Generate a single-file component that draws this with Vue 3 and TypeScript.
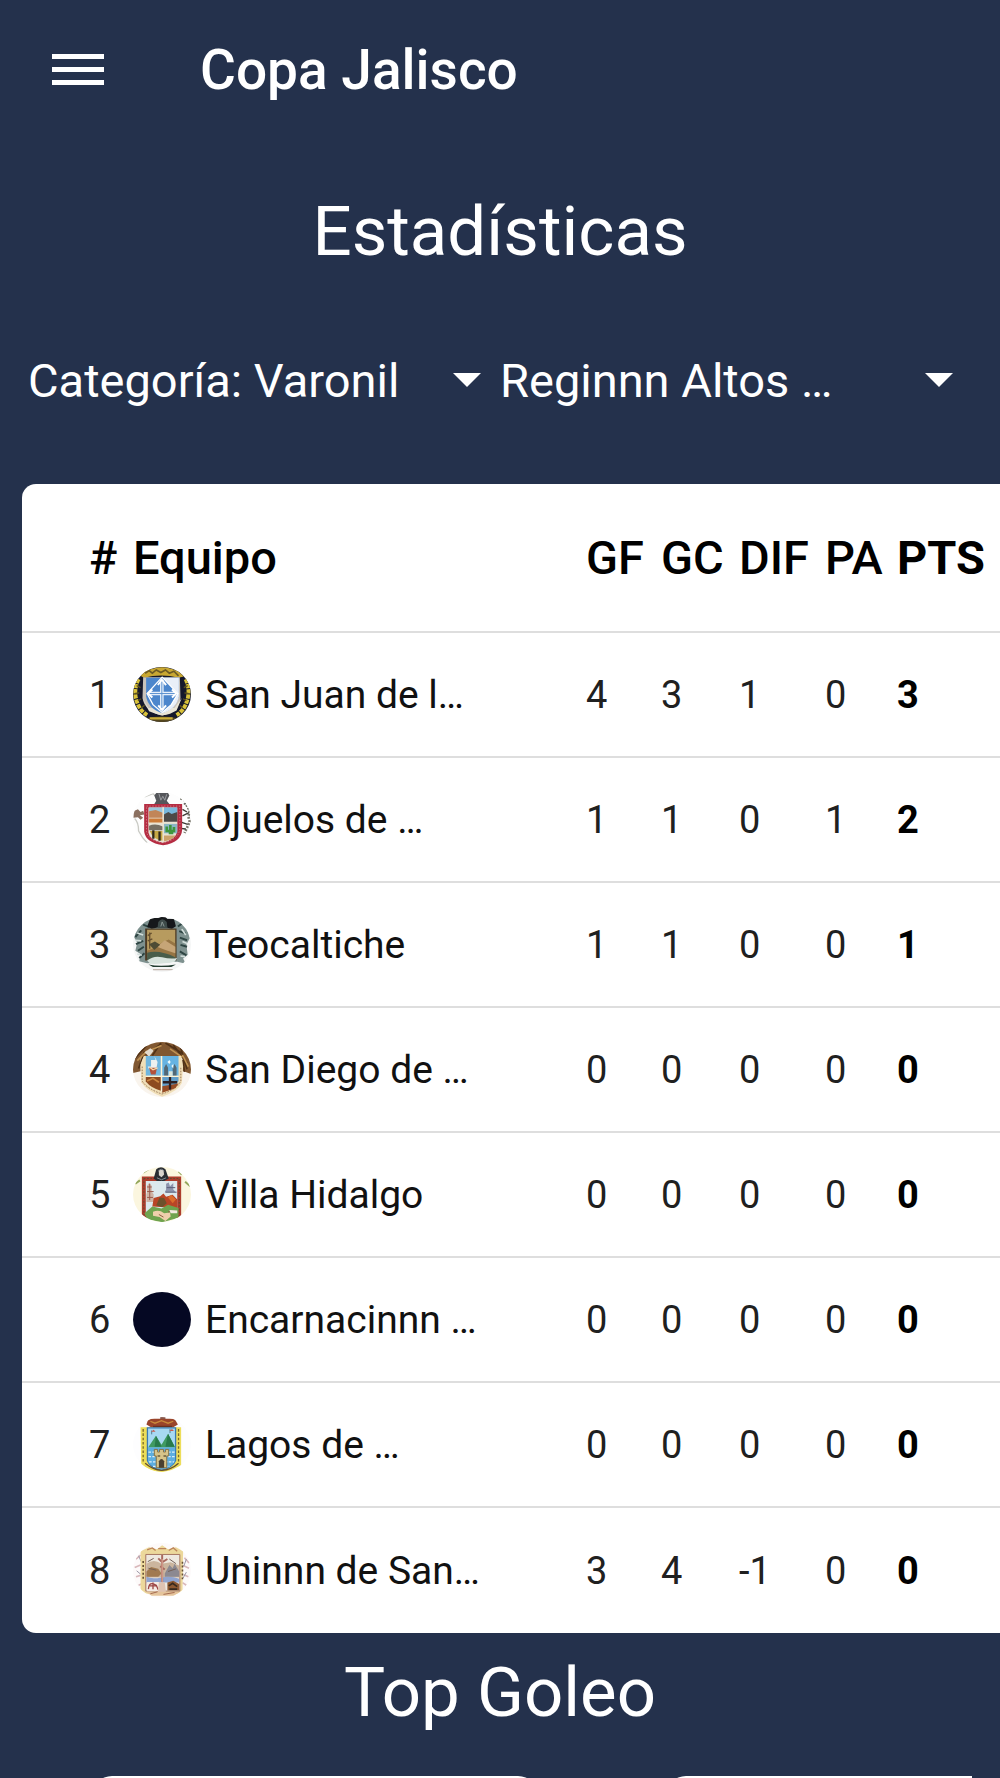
<script setup lang="ts">
import { ref } from 'vue'

interface Team {
  rank: number
  crest: string
  name: string
  gf: number
  gc: number
  dif: number
  pa: number
  pts: number
}

const category = ref('Categoría: Varonil')
const region = ref('Reginnn Altos …')

const teams: Team[] = [
  { rank: 1, crest: 'san-juan', name: 'San Juan de l…', gf: 4, gc: 3, dif: 1, pa: 0, pts: 3 },
  { rank: 2, crest: 'ojuelos', name: 'Ojuelos de …', gf: 1, gc: 1, dif: 0, pa: 1, pts: 2 },
  { rank: 3, crest: 'teocaltiche', name: 'Teocaltiche', gf: 1, gc: 1, dif: 0, pa: 0, pts: 1 },
  { rank: 4, crest: 'san-diego', name: 'San Diego de …', gf: 0, gc: 0, dif: 0, pa: 0, pts: 0 },
  { rank: 5, crest: 'villa-hidalgo', name: 'Villa Hidalgo', gf: 0, gc: 0, dif: 0, pa: 0, pts: 0 },
  { rank: 6, crest: 'encarnacion', name: 'Encarnacinnn …', gf: 0, gc: 0, dif: 0, pa: 0, pts: 0 },
  { rank: 7, crest: 'lagos', name: 'Lagos de …', gf: 0, gc: 0, dif: 0, pa: 0, pts: 0 },
  { rank: 8, crest: 'union', name: 'Uninnn de San…', gf: 3, gc: 4, dif: -1, pa: 0, pts: 0 },
]
</script>

<template>
  <div class="page">
    <header class="bar">
      <button class="menu" type="button" aria-label="Menú">
        <svg viewBox="0 0 52 34" width="52" height="34" fill="#fff">
          <rect y="1" width="52" height="5" />
          <rect y="14" width="52" height="5" />
          <rect y="27" width="52" height="5" />
        </svg>
      </button>
      <h1 class="brand">Copa Jalisco</h1>
    </header>

    <main>
      <h2 class="title">Estadísticas</h2>

      <div class="filters">
        <div class="filter">
          <select v-model="category" aria-label="Categoría">
            <option>Categoría: Varonil</option>
            <option>Categoría: Femenil</option>
          </select>
          <svg class="caret" viewBox="0 0 28 14" width="28" height="14"><path d="M0 0h28L14 14z" fill="#fff" /></svg>
        </div>
        <div class="filter">
          <select v-model="region" aria-label="Región">
            <option>Reginnn Altos …</option>
          </select>
          <svg class="caret" viewBox="0 0 28 14" width="28" height="14"><path d="M0 0h28L14 14z" fill="#fff" /></svg>
        </div>
      </div>

      <table class="standings">
        <colgroup>
          <col class="c-rank" /><col /><col class="c-gf" /><col class="c-gc" />
          <col class="c-dif" /><col class="c-pa" /><col class="c-pts" />
        </colgroup>
        <thead>
          <tr>
            <th class="rank" scope="col">#</th>
            <th scope="col">Equipo</th>
            <th scope="col">GF</th>
            <th scope="col">GC</th>
            <th scope="col">DIF</th>
            <th scope="col">PA</th>
            <th class="pts" scope="col">PTS</th>
          </tr>
        </thead>
        <tbody>
          <tr v-for="team in teams" :key="team.rank">
            <td class="rank">{{ team.rank }}</td>
            <td>
              <div class="team">
                <svg class="crest" viewBox="39 47 177 168" width="58" height="55" aria-hidden="true">
                  <g v-if="team.crest === 'san-juan'">
                    <path d="M39 47h177v168H39z" fill="#15182b" />
                    <path d="M62 74q10-18 38-22 28-8 54 0 24 4 40 24l-16 4q-52-14-106 0z" fill="#c9a832" />
                    <path d="M76 66l12-8 10 8 12-10 14 8 14-8 12 10 14-6 14 14" fill="none" stroke="#6b5a24" stroke-width="5" />
                    <path d="M56 84q-18 36-4 72 8 24 30 38M200 84q16 36 2 72-8 24-30 38" fill="none" stroke="#d9c23a" stroke-width="12" stroke-dasharray="13 3" />
                    <path d="M50 104l12 6M46 128l12-2M54 150l10-6M64 172l10-8M206 104l-12 6M208 128l-12-2M202 150l-10-6M190 172l-8-8" stroke="#5d511d" stroke-width="4" />
                    <path d="M70 78h112l2 64q-4 38-56 54-54-14-60-54z" fill="#c9c3bb" />
                    <path d="M68 142l20 40 20 8q22 8 44 0l20-10 16-38-22 30H86z" fill="#e9e4d4" />
                    <path d="M79 80h100v56q-8 38-50 52-44-14-50-52z" fill="#4c86cc" />
                    <path d="M128 80h51v56q-6 38-50 52z" fill="#e9eff8" />
                    <path d="M128 78l48 50-20 34-28 24-28-24-18-34z" fill="#4c86cc" stroke="#fff" stroke-width="4" />
                    <path d="M127 86v92M86 128h84" stroke="#e8f0fb" stroke-width="11" />
                    <path d="M115 102l12-16 13 16M98 116l-13 12 13 12M158 116l13 12-13 12M116 164l12 14 12-14" fill="none" stroke="#fff" stroke-width="6" />
                    <path d="M127 92v80M90 128h76" stroke="#5c91cf" stroke-width="3" />
                    <path d="M74 204q52-12 106 0v12H74z" fill="#54461e" />
                    <path d="M90 204h70" stroke="#c9ad3a" stroke-width="7" />
                  </g>

                  <g v-else-if="team.crest === 'ojuelos'">
                    <path d="M39 47h177v168H39z" fill="#fdfdfd" />
                    <path d="M40 106l14-6 8 8 8-4 4 12-14 2 10 8-8 6-8-8-14 2z" fill="#8b7060" />
                    <path d="M44 128q12 12 12 38 10 20 26 36M74 62l26-10 10 10" fill="none" stroke="#c9cac4" stroke-width="4" />
                    <path d="M184 66l16 8 4 16 8 14-4 18 4 16-8 18-8 16" fill="none" stroke="#77766b" stroke-width="8" stroke-dasharray="6 4" />
                    <path d="M194 84l14-4M190 100l14 8M190 120l20-10M188 140l18 6M184 158l16 2" stroke="#3d3b35" stroke-width="4" />
                    <path d="M110 50h36l4 8-8 16 8 10h-46l6-10-6-16z" fill="#55575b" />
                    <path d="M118 52l6 20 6-12 6 12 6-18" fill="none" stroke="#9b9da1" stroke-width="3" />
                    <path d="M73 84h116v78q-2 38-58 48-54-8-58-42z" fill="#b52c42" />
                    <path d="M80 90h102v70q-4 32-50 42-48-6-52-36z" fill="none" stroke="#d9a3a1" stroke-width="2" stroke-dasharray="4 5" />
                    <path d="M86 94h88v72q-2 24-44 36-42-8-44-32z" fill="#e6e2d6" />
                    <path d="M88 94h42v20H88z" fill="#9cc7dc" /><path d="M133 94h41v20h-41z" fill="#79b8dd" />
                    <path d="M88 106l20-4 22 8v16H88z" fill="#c18558" />
                    <path d="M133 116l14-8 10 6 17-6v30h-41z" fill="#4d4a48" />
                    <path d="M88 128h42v14H88z" fill="#cc7b38" />
                    <path d="M88 150q20-8 42 2v12H88z" fill="#776f63" />
                    <path d="M133 143h41v30h-41z" fill="#8ab6c4" />
                    <path d="M142 152v14h22v-12M153 148v28M148 172h14" fill="none" stroke="#3e963c" stroke-width="8" />
                    <path d="M90 166h40v30q-30-4-40-30z" fill="#c5a745" />
                    <path d="M101 164v26M120 168v28" stroke="#30291d" stroke-width="7" />
                    <path d="M133 180h36q-10 14-36 18z" fill="#cba26a" />
                    <path d="M131 92v106M86 142h88" stroke="#eee4d0" stroke-width="4" />
                  </g>

                  <g v-else-if="team.crest === 'teocaltiche'">
                    <path d="M39 47h177v168H39z" fill="#f5f6f6" />
                    <path d="M84 52h88l16 14 16 18 8 28-10 20 4 30-14 12 8 16-26-6-92 4-24-6 4-22-16-10 6-24-10-18 8-30 20-12z" fill="#7e918f" />
                    <path d="M46 108l18-20M48 130l22-10M54 150l18-12M58 172l16-14M180 90l20 8M182 110l22 8M184 132l20 6M182 152l20 12M70 70l18 8M176 76l14-10" stroke="#2e4543" stroke-width="6" />
                    <path d="M52 96l18 6M46 118l18 2M52 160l14 4M188 84l12 18M190 122l14 6M184 166l14 2" stroke="#d2dedb" stroke-width="5" />
                    <path d="M92 50h24l8-3h14l6 6h20l6 22-12 8-18-4h-26l-18 4-14-6z" fill="#16181b" />
                    <path d="M116 62q12-16 26 0l2 18h-30z" fill="#3e4b4a" />
                    <path d="M124 76l4-14 6 14" stroke="#8b9794" stroke-width="3" fill="none" />
                    <path d="M76 82h96v98H76z" fill="#4d3b25" />
                    <path d="M82 86h86v86H82z" fill="#b79b5f" />
                    <path d="M82 150l22-8 22-16 22-10 20 12v44H82z" fill="#967544" />
                    <path d="M112 138l24-20 32 20v20l-30-10z" fill="#c6a577" />
                    <path d="M90 94v50M84 104l12-8M84 120l14-6" stroke="#66502f" stroke-width="4" />
                    <path d="M88 130l18-8 16 10-18 16z" fill="#4e4c35" />
                    <path d="M82 156q38-10 86 14v10H82z" fill="#485d4b" />
                    <path d="M82 180q20-16 46-10t46 2l-8 12q-44 8-74 6z" fill="#d7e3dd" />
                    <path d="M86 192q36 8 84 0l-14 8H100z" fill="#243e32" />
                    <path d="M100 208h60" stroke="#b5a59b" stroke-width="3" />
                  </g>

                  <g v-else-if="team.crest === 'san-diego'">
                    <path d="M39 47h177v168H39z" fill="#f9f4ed" />
                    <path d="M39 142V47h177v98l-26-10V94H62v42z" fill="#805731" />
                    <path d="M42 100l40-44M56 128l18-52M78 86l48-34M98 88l26-38M138 50l52 32M162 56l42 56M184 62l20 68M192 102l4 36" stroke="#503116" stroke-width="5" />
                    <path d="M52 104l30-30M92 72l34-14M152 68l38 26M190 86l18 36" stroke="#bf9252" stroke-width="5" />
                    <path d="M74 78l18-12 10 8-14 18z" fill="#e4dbcd" />
                    <path d="M62 116l10-26h114l6 32-4 50q-10 24-60 42-46-16-64-44z" fill="#f0dfb8" />
                    <path d="M67 122v44q12 22 60 40 48-16 58-40v-44" fill="none" stroke="#9b795a" stroke-width="3" stroke-dasharray="5 4" />
                    <path d="M78 90h46v60H78z" fill="#70b6df" /><path d="M128 90h50v60h-50z" fill="#66b3e2" />
                    <path d="M94 102h14l-4-12 10 18-4 22H88l-4-8h10z" fill="#edf1f0" />
                    <path d="M88 126h24l-4 20H94z" fill="#b3513b" />
                    <path d="M90 124l10 8 14-6" stroke="#f3dcac" stroke-width="4" fill="none" />
                    <path d="M134 150v-24l6-12 6 12v24M160 150v-24l6-12 6 12v24" fill="#526875" />
                    <path d="M144 108l6-6 4 6-4 6zM156 120l6-6v14z" fill="#effafa" />
                    <path d="M148 136h12v14h-12z" fill="#dce6dc" />
                    <path d="M78 154h46v42q-30-8-46-28z" fill="#8d4a20" />
                    <path d="M82 166l18-8 18 12" fill="none" stroke="#cb8741" stroke-width="5" />
                    <path d="M128 154h50v12q-10 20-50 34z" fill="#639fca" />
                    <path d="M128 182l50-8-10 14-40 14z" fill="#974c24" />
                    <path d="M152 154v38M130 170h44" stroke="#2c2022" stroke-width="7" />
                    <path d="M126 90v108M78 152h100" stroke="#fff4d5" stroke-width="4" />
                  </g>

                  <g v-else-if="team.crest === 'villa-hidalgo'">
                    <path d="M39 47h177v168H39z" fill="#fbf6df" />
                    <path d="M46 98l14-10M70 64l16-10M198 92l16 14M178 60l10 10" stroke="#94a75b" stroke-width="6" />
                    <path d="M66 76h120v126H66z" fill="#ad3d2d" />
                    <path d="M72 82h108v114H72z" fill="none" stroke="#5b4b32" stroke-width="3" stroke-dasharray="5 5" />
                    <path d="M78 90h96v106H78z" fill="#dce9ed" />
                    <path d="M110 54q14-12 28 0l10 28-14 8h-22l-10-8z" fill="#292d32" />
                    <path d="M118 56h14l2 14-8 8-8-6z" fill="#d9d3cb" />
                    <path d="M116 60q10-12 18 0M112 80l14 6 14-6" fill="none" stroke="#878d92" stroke-width="3" />
                    <path d="M82 124v-20l6-8 8 8v18l6 8v24H80v-24z" fill="#cfb4a6" />
                    <path d="M82 108h14M82 122h20M82 140h18M90 98v50" stroke="#9a5a4c" stroke-width="3" />
                    <path d="M140 116v-18l8-4 4 12 10-10v20l8 8h-34z" fill="#8d94ad" />
                    <path d="M142 110h26M138 124h34" stroke="#595e76" stroke-width="3" />
                    <path d="M98 168l4-26 20-6 10-8 8 10 20-6 14 14v26z" fill="#b94526" />
                    <path d="M110 164l10-24 14 2 8 16-14 12z" fill="#6d512c" />
                    <path d="M146 140l10-8 14 14-10 12z" fill="#db6d2c" />
                    <path d="M74 188l24-20 28 6 20-12 32 10v30l-50 14-46-10z" fill="#6fa34e" />
                    <path d="M100 184q18-8 34 4l18-2 2 12-16 14-18-12-20-4z" fill="#efcfac" />
                    <path d="M118 192l14 8M146 184l24-2" stroke="#8e5f42" stroke-width="3" />
                    <path d="M150 178l24 2v8h-20z" fill="#f2eadf" />
                  </g>

                  <path v-else-if="team.crest === 'encarnacion'" d="M39 47h177v168H39z" fill="#050823" />

                  <g v-else-if="team.crest === 'lagos'">
                    <path d="M39 47h177v168H39z" fill="#fdfdfe" />
                    <path d="M62 78h124v116q-30 18-60 22-38-4-62-24z" fill="#eddd59" />
                    <path d="M70 84v102M178 84v102" stroke="#796829" stroke-width="4" stroke-dasharray="8 5" />
                    <path d="M86 52h80l10 18-14 8H94l-14-8z" fill="#9a452b" />
                    <path d="M92 60l14 6 20-8 20 8 16-6" fill="none" stroke="#c98a3c" stroke-width="4" />
                    <path d="M100 76h58M122 50h16" stroke="#693020" stroke-width="4" />
                    <path d="M83 80h86v100q-8 20-43 30-36-8-43-30z" fill="#a8d9f2" stroke="#3979b5" stroke-width="4" />
                    <path d="M85 140l24-36 17 28 20-34 22 42z" fill="#3f9a62" />
                    <path d="M109 104l-4 34h21zM146 98l-8 40h28z" fill="#277a4b" />
                    <path d="M96 88v12M152 84v12" stroke="#557d92" stroke-width="3" />
                    <path d="M94 92l8-6 6 6zM150 90l8-6 6 6z" fill="#c75d52" />
                    <path d="M85 140h82v44q-14 20-41 24-34-8-41-24z" fill="#5daee0" />
                    <path d="M86 154h80M86 168h80M88 184h76M100 198h50" stroke="#dceffa" stroke-width="4" stroke-dasharray="8 4" />
                    <path d="M104 146h10v8h6v-8h12v8h6v-8h10v20h-6v36h-32v-36h-6z" fill="#d7c489" stroke="#867143" stroke-width="3" />
                    <path d="M118 202v-20q8-14 16 0v20z" fill="#4a4031" />
                    <path d="M114 166h8M132 166h8" stroke="#6b5c3c" stroke-width="5" />
                    <path d="M76 188q24 20 50 22 30-2 52-22" fill="none" stroke="#67502d" stroke-width="4" />
                  </g>

                  <g v-else>
                    <path d="M39 47h177v168H39z" fill="#fdfafa" />
                    <path d="M48 96l14-12M44 122l18-8M48 150l14-4M56 176l14-6M196 92l14 16M192 116l18 8M194 144l14 6M190 168l12 8" stroke="#d9b8bb" stroke-width="5" />
                    <path d="M56 86l8 18M50 132l12 10M202 96l-8 22M202 136l-10 18" stroke="#9a96a5" stroke-width="3" />
                    <path d="M62 72l26-12 24 6 16-12 18 12 24-6 22 12-2 130H62z" fill="#ecd89b" />
                    <path d="M82 68l16-6 10 8M148 70l14-8 12 10M116 64h24" fill="none" stroke="#bd855b" stroke-width="4" />
                    <path d="M78 82h104v112H78z" fill="#eee8df" stroke="#a57562" stroke-width="3" />
                    <path d="M70 102v58M190 104v58" stroke="#675135" stroke-width="5" stroke-dasharray="6 6" />
                    <path d="M80 110q22-16 46 0l28-4 26 10v36H80z" fill="#cbb59e" />
                    <path d="M80 134l14-14 22 6 10 14-10 10H80z" fill="#a17a50" />
                    <path d="M136 140l14-26 10 10 6-14 14 24v16h-44z" fill="#8c8991" />
                    <path d="M84 104l18-10M86 124l24 6M150 96l20 14M146 134l24-8" stroke="#746057" stroke-width="3" />
                    <path d="M80 150q16 8 46 2 28-6 54 4v12H80z" fill="#90a4cf" />
                    <path d="M128 84v82M116 94l12 12 16-10M122 118l14 10" fill="none" stroke="#a8695f" stroke-width="6" />
                    <path d="M128 96v74" stroke="#e6b09e" stroke-width="3" />
                    <path d="M82 166h36v28H82z" fill="#f4ebe4" />
                    <path d="M86 188q2-26 24-12l6 14M90 178h22M100 168v20" fill="none" stroke="#9c4544" stroke-width="4" />
                    <path d="M144 168l18-6 18 10v20h-36z" fill="#8c5831" />
                    <path d="M148 178l12-8 14 10M150 188h24" fill="none" stroke="#37291e" stroke-width="5" />
                    <path d="M118 168h18l4 32h-26z" fill="#dfc3b2" />
                    <path d="M78 196h104l-16 12h-70z" fill="#e5c49b" />
                    <path d="M92 202l22-6M132 204l34-6" stroke="#a46a51" stroke-width="3" />
                  </g>
                </svg>
                <span>{{ team.name }}</span>
              </div>
            </td>
            <td>{{ team.gf }}</td>
            <td>{{ team.gc }}</td>
            <td>{{ team.dif }}</td>
            <td>{{ team.pa }}</td>
            <td class="pts">{{ team.pts }}</td>
          </tr>
        </tbody>
      </table>

      <h2 class="title scorers-title">Top Goleo</h2>
      <div class="scorers">
        <article class="card"></article>
        <article class="card"></article>
      </div>
    </main>
  </div>
</template>

<style>
body {
  margin: 0;
  background: #24314c;
}
</style>

<style scoped>
.page {
  box-sizing: border-box;
  height: 100vh;
  overflow: hidden auto;
  scrollbar-width: none;
  background: #24314c;
  color: #fff;
  font-family: Roboto, 'Liberation Sans', sans-serif;
}
.bar {
  display: flex;
  align-items: center;
  gap: 96px;
  height: 140px;
  padding: 0 52px;
}
.menu {
  display: flex;
  padding: 0;
  border: 0;
  background: none;
}
.brand {
  margin: 0;
  font-size: 55px;
  line-height: 60px;
  font-weight: 500;
}
.title {
  margin: 0;
  padding: 52px 0;
  font-size: 69px;
  line-height: 80px;
  font-weight: 400;
  text-align: center;
}
.filters {
  display: grid;
  grid-template-columns: 453px 1fr;
  gap: 19px;
  padding: 26px 47px 74px 28px;
}
.filter {
  display: flex;
  align-items: center;
  position: relative;
}
select {
  flex: 1;
  min-width: 0;
  height: 60px;
  padding: 0 40px 0 0;
  border: 0;
  background: none;
  color: inherit;
  font-family: inherit;
  font-size: 47px;
  appearance: none;
}
option {
  color: #000;
}
.caret {
  position: absolute;
  right: 0;
  pointer-events: none;
}
.standings {
  width: calc(100% - 22px);
  margin-left: 22px;
  table-layout: fixed;
  border-collapse: separate;
  border-spacing: 0;
  overflow: hidden;
  border-radius: 14px 0 0 14px;
  background: #fff;
  color: #202020;
}
.c-rank { width: 111px; }
.c-gf { width: 75px; }
.c-gc { width: 78px; }
.c-dif { width: 86px; }
.c-pa { width: 72px; }
.c-pts { width: 103px; }
th,
td {
  box-sizing: border-box;
  height: 125px;
  padding: 0;
  border-bottom: 2px solid #dedede;
  font-size: 38px;
  text-align: left;
  vertical-align: middle;
  white-space: nowrap;
}
th {
  height: 149px;
  color: #000;
  font-size: 47px;
  font-weight: 500;
}
tbody tr:last-child td {
  border-bottom: 0;
}
.rank {
  padding-left: 67px;
}
.pts {
  color: #000;
  font-weight: 700;
}
.team {
  display: flex;
  align-items: center;
  gap: 14px;
  color: #111;
  font-size: 39px;
}
.crest {
  flex: none;
  border-radius: 50%;
}
.scorers-title {
  padding: 20px 0 43px;
}
.scorers {
  display: flex;
  gap: 128px;
  margin: 0 28px;
  padding-left: 64px;
  overflow: hidden;
}
.card {
  flex: none;
  width: 446px;
  height: 360px;
  border-radius: 20px;
  background: #fff;
}
</style>
